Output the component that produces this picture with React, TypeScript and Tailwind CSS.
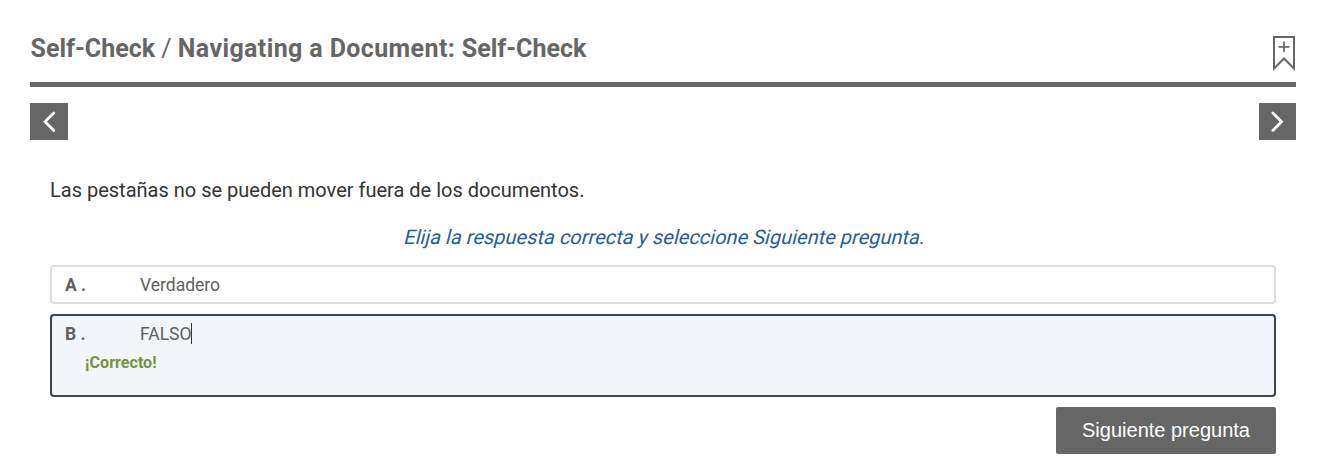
export default function App() {
  return (
    <main className="h-[475px] w-[1324px] bg-white pl-[30px] pr-7 font-['Roboto',sans-serif]">
      <header className="flex h-[87px] items-start justify-between border-b-5 border-[#666] pt-9">
        <h1 className="-mt-[5px] pl-[0.5px] whitespace-nowrap text-[25px] leading-9 font-bold text-[#666]">
          <span>Self-Check</span>
          <span className="font-normal"> / </span>
          <span className="tracking-[0.38px]">Navigating a Document: </span>
          <span>Self-Check</span>
        </h1>
        <svg className="h-[35px] w-6" viewBox="0 0 24 35" fill="none" stroke="#666" strokeWidth="2">
          <path d="M2 1H22V32.5L12 22.5L2 32.5Z" />
          <path d="M12 5.5V16M6.5 10.8H17.5" strokeWidth="1.7" />
        </svg>
      </header>
      <nav className="mt-4 flex justify-between">
        <button className="h-[37px] w-[38px] bg-[#666]" aria-label="Anterior">
          <svg className="h-[37px] w-[38px]" viewBox="0 0 38 37" fill="none" stroke="white" strokeWidth="2.7" strokeLinecap="round"><path d="M23.8 10L15 18.7L23.8 27.5" /></svg>
        </button>
        <button className="h-[37px] w-[37px] bg-[#666]" aria-label="Siguiente">
          <svg className="h-[37px] w-[37px]" viewBox="0 0 37 37" fill="none" stroke="white" strokeWidth="2.7" strokeLinecap="round"><path d="M13.8 10L22.6 18.7L13.8 27.5" /></svg>
        </button>
      </nav>
      <section className="px-5 pt-[35px]">
        <p className="text-xl leading-[30px] text-[#333]">Las pestañas no se pueden mover fuera de los documentos.</p>
        <p className="mt-[17px] text-center text-xl leading-[30px] text-[#1f5f99]"><span className="inline-block origin-[50%_75%] -skew-x-[14deg]">Elija la respuesta correcta y seleccione Siguiente pregunta.</span></p>
        <div className="mt-[13px] flex h-[39px] rounded-[4px] border-2 border-[#ddd] pt-[5px] pl-[13px] text-[17.5px] leading-[26px] text-[#606060]">
          <span className="w-[75px] font-bold">A .</span><span>Verdadero</span>
        </div>
        <div className="mt-[10px] h-[83px] rounded-[4px] border-2 border-[#3b4548] bg-[#f2f5fa] pt-[5px] pl-[13px] text-[17.5px] leading-[26px] text-[#606060]">
          <div className="flex"><span className="w-[75px] font-bold">B .</span><span>FALSO</span><i className="-ml-px mt-0.5 h-[21px] w-px bg-[#333]" /></div>
          <p className="pl-5 text-[16.1px] leading-8 font-bold text-[#76933c]">¡Correcto!</p>
        </div>
        <div className="mt-[10px] flex justify-end">
          <button className="h-[47px] w-[220px] rounded-[2px] bg-[#666] pb-0.5 font-['Liberation_Sans',sans-serif] text-xl text-white">Siguiente pregunta</button>
        </div>
      </section>
    </main>
  );
}
